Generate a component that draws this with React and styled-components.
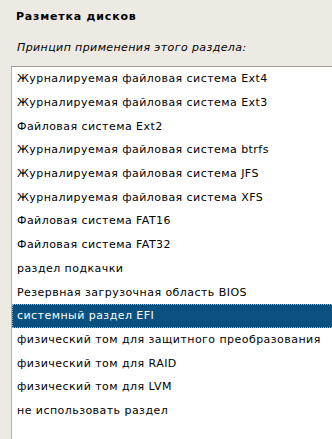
import React from "react";
import styled, { createGlobalStyle } from "styled-components";

const GlobalStyle = createGlobalStyle`
  html, body {
    margin: 0;
    padding: 0;
    background: #edeae3;
    overflow: hidden;
  }
  body {
    font-family: "DejaVu Sans", "Liberation Sans", sans-serif;
    color: #000;
  }
`;

const Page = styled.div`
  width: 332px;
  height: 439px;
  overflow: hidden;
  display: flex;
  flex-direction: column;
  background: #edeae3;
`;

const Title = styled.h1`
  margin: 0;
  padding: 9px 0 0 16px;
  font-size: 11px;
  font-weight: bold;
  line-height: 15px;
  letter-spacing: 0.8px;
`;

const Subtitle = styled.p`
  margin: 17px 0 0 0;
  padding-left: 17px;
  font-size: 11px;
  font-style: italic;
  line-height: 14px;
  letter-spacing: 0.4px;
`;

const ListBox = styled.ul`
  list-style: none;
  margin: 11px -20px 0 11px;
  padding: 0;
  flex: 1;
  background: #fff;
  border-top: 1px solid #a29e93;
  border-left: 1px solid #b2afa6;
`;

const Row = styled.li`
  height: 23.7px;
  display: flex;
  align-items: center;
  padding-left: 5px;
  font-size: 11px;
  letter-spacing: 0.45px;
  white-space: nowrap;
  background: ${(p) => (p.$selected ? "#0a5182" : "transparent")};
  color: ${(p) => (p.$selected ? "#fff" : "#000")};
  outline: ${(p) => (p.$selected ? "1px dotted rgba(255,255,255,0.55)" : "none")};
  outline-offset: -1px;
`;

const items = [
  "Журналируемая файловая система Ext4",
  "Журналируемая файловая система Ext3",
  "Файловая система Ext2",
  "Журналируемая файловая система btrfs",
  "Журналируемая файловая система JFS",
  "Журналируемая файловая система XFS",
  "Файловая система FAT16",
  "Файловая система FAT32",
  "раздел подкачки",
  "Резервная загрузочная область BIOS",
  "системный раздел EFI",
  "физический том для защитного преобразования",
  "физический том для RAID",
  "физический том для LVM",
  "не использовать раздел",
];

export default function App() {
  return (
    <>
      <GlobalStyle />
      <Page>
        <Title>Разметка дисков</Title>
        <Subtitle>Принцип применения этого раздела:</Subtitle>
        <ListBox>
          {items.map((t, i) => (
            <Row key={t} $selected={i === 10}>
              {t}
            </Row>
          ))}
        </ListBox>
      </Page>
    </>
  );
}
